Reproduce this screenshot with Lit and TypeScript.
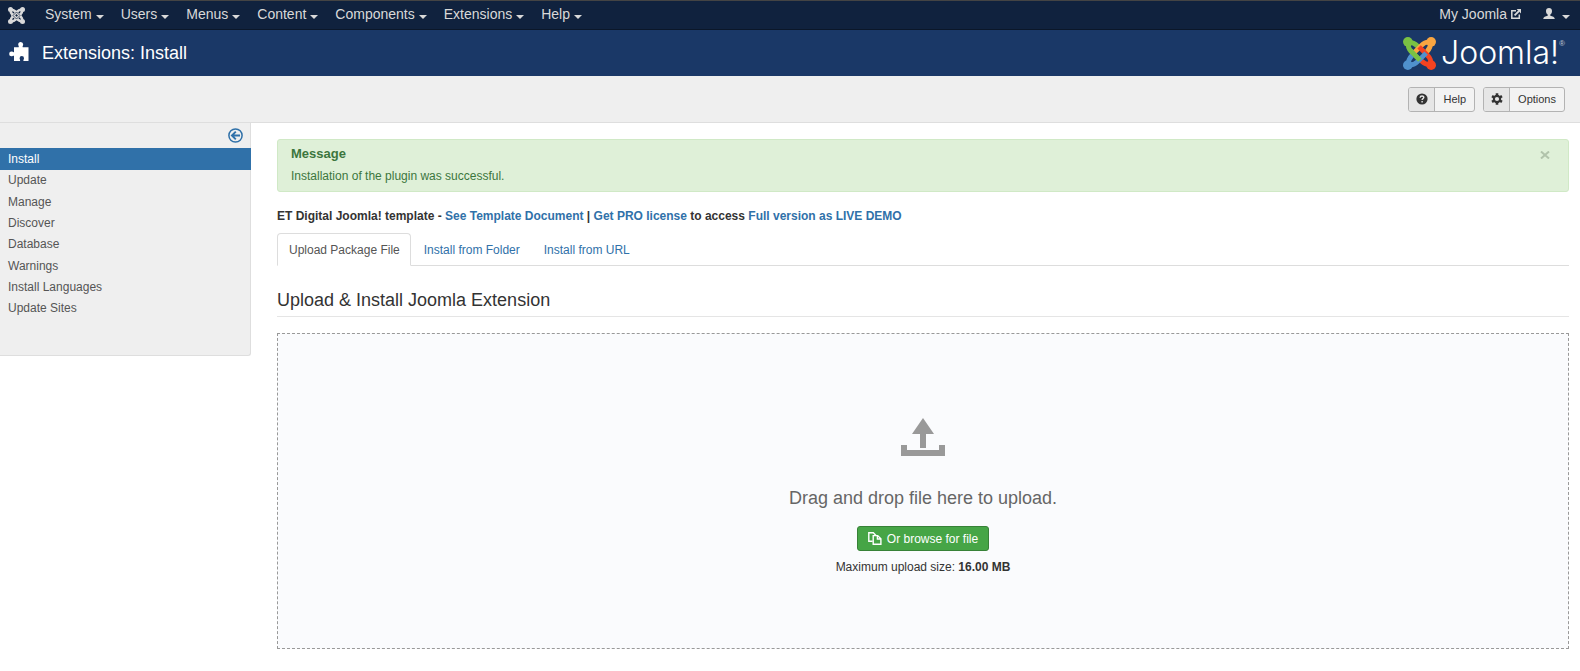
import { LitElement, html, css, svg } from "lit";
import { customElement, property, state } from "lit/decorators.js";
import { classMap } from "lit/directives/class-map.js";

const MENUS = ["System", "Users", "Menus", "Content", "Components", "Extensions", "Help"];
const SIDEBAR = ["Install", "Update", "Manage", "Discover", "Database", "Warnings", "Install Languages", "Update Sites"];
const TABS = ["Upload Package File", "Install from Folder", "Install from URL"];

/* One arm of the emblem; the other three are quarter turns of it. */
const ARM = "M16.800 11.200L14.600 9C12.400 6.800 9.600 5.400 5.600 5.600C4.600 10 6 12.400 8.600 15L17.400 23.800";
const arm = (turn: number, color: string) => svg`
  <g transform="rotate(${turn} 17 17)" fill="none" stroke=${color}>
    <path d=${ARM} stroke-width="5"/>
    <circle cx="5" cy="5" r="5" fill=${color} stroke="none"/>
  </g>`;
const emblem = (colors: string[]) => svg`
  ${arm(0, colors[0])}${arm(90, colors[1])}${arm(180, colors[2])}${arm(270, colors[3])}
  <path d="M7.600 14L17.400 23.800" fill="none" stroke=${colors[0]} stroke-width="5"/>`;

@customElement("joomla-topbar")
export class JoomlaTopbar extends LitElement {
  static styles = css`
    :host { display: block; }
    .bar { display: flex; align-items: center; height: 26px; background: #10223e; border-top: 1px solid #444; border-bottom: 1px solid #0b1729; font-size: 14px; line-height: 20px; padding: 0 8px 2px; }
    .home { display: flex; width: 17px; margin-right: 12px; }
    .menus { display: flex; flex: 1; gap: 1px; margin: 0; padding: 0; list-style: none; }
    a { display: flex; align-items: center; gap: 4px; color: #d9d9d9; text-decoration: none; padding: 0 8px; }
    a.home { padding: 2px 0 0; }
    .caret { width: 0; border: 4px solid transparent; border-top-color: currentColor; border-bottom: 0; margin-top: 5px; }
    .user { padding: 0 2px 0 14px; gap: 7px; }
  `;
  render() {
    return html`<nav class="bar">
      <a class="home" href="#" aria-label="Control Panel">
        <svg width="17" height="17" viewBox="0 0 34 34">${emblem(["#d9d9d9", "#d9d9d9", "#d9d9d9", "#d9d9d9"])}
          <path d="M17 10l7 7-7 7-7-7z" fill="none" stroke="#10223e" stroke-width="1.400"/></svg>
      </a>
      <ul class="menus">${MENUS.map((m) => html`<li><a href="#">${m}<span class="caret"></span></a></li>`)}</ul>
      <a href="#">My Joomla
        <svg width="10" height="10" viewBox="0 0 10 10" fill="none" stroke="currentColor"><path d="M5 1.700H.8V9.200H8.300V5.600" stroke-width="1.500"/><path d="M3.600 6.400L8 2" stroke-width="1.800"/><path d="M5.600 0H10v4.400z" fill="currentColor" stroke="none"/></svg>
      </a>
      <a class="user" href="#" aria-label="User menu">
        <svg width="12" height="12" viewBox="0 0 12 12" fill="currentColor"><path d="M6 0C7.900 0 9 1.200 9 3.100 9 4.700 8.300 6 7.300 6.600V7.700C9.500 8.100 11.700 9 11.800 11H.2C.3 9 2.500 8.100 4.700 7.700V6.600C3.700 6 3 4.700 3 3.100 3 1.200 4.100 0 6 0z"/></svg>
        <span class="caret"></span>
      </a>
    </nav>`;
  }
}

@customElement("joomla-header")
export class JoomlaHeader extends LitElement {
  @property() heading = "";
  static styles = css`
    :host { display: block; }
    .header { display: flex; align-items: center; height: 46px; padding: 0 15px 0 9px; background: #1a3867; color: #fff; }
    .puzzle { margin-bottom: 2px; }
    h1 { flex: 1; margin: 0 0 0 13px; font-size: 18px; line-height: 24px; font-weight: 400; }
    .brand { display: flex; align-items: center; gap: 5px; }
    .word { font: 300 32px/36px Inter, "Open Sans", sans-serif; }
    .reg { font-size: 8px; align-self: flex-start; line-height: 18px; margin-left: -5px; opacity: 0.7; }
  `;
  render() {
    return html`<header class="header">
      <svg class="puzzle" width="20" height="20" viewBox="0 0 20 20" fill="#fff"><path d="M5 5.300H9.600C10.300 4.700 9.200 3.700 9.200 2.500A2.500 2.500 0 0 1 14.200 2.500C14.200 3.700 13.100 4.700 13.800 5.300H19.500V19H14.500C14 18 15 17.400 15 16.200A2.200 2.200 0 0 0 10.600 16.200C10.600 17.400 11.600 18 11 19H5V14C4.400 13.200 3.700 14.300 2.500 14.300A2.300 2.300 0 0 1 2.500 9.600C3.700 9.600 4.400 10.700 5 10z"/></svg>
      <h1>${this.heading}</h1>
      <div class="brand">
        <svg width="33" height="33" viewBox="0 0 34 34">${emblem(["#7ac143", "#f9a541", "#f44321", "#5091cd"])}</svg>
        <span class="word">Joomla!</span><span class="reg">®</span>
      </div>
    </header>`;
  }
}

@customElement("joomla-toolbar")
export class JoomlaToolbar extends LitElement {
  static styles = css`
    :host { display: block; }
    .bar { display: flex; justify-content: flex-end; align-items: center; gap: 8px; height: 46px; padding: 0 15px; background: #efefef; border-bottom: 1px solid #dedede; }
    button { display: flex; align-items: stretch; height: 25px; padding: 0; font: 11px/23px "Liberation Sans", Arial, sans-serif; color: #333; background: #f3f3f3; border: 1px solid #b3b3b3; border-radius: 3px; overflow: hidden; }
    .icon { display: grid; place-items: center; width: 25px; background: #e6e6e6; border-right: 1px solid #b3b3b3; }
    .label { padding: 0 8px; }
  `;
  render() {
    return html`<div class="bar">
      <button type="button"><span class="icon"><svg width="12" height="12" viewBox="0 0 12 12"><circle cx="6" cy="6" r="5.600" fill="#333"/><path d="M4.100 4.700C4.200 2.400 7.900 2.500 7.800 4.500 7.700 5.700 6.100 5.700 6.100 7.100M6.100 8.100V9.500" fill="none" stroke="#e6e6e6" stroke-width="1.400"/></svg></span><span class="label">Help</span></button>
      <button type="button"><span class="icon"><svg width="12" height="12" viewBox="0 0 12 12"><g stroke="#333" stroke-width="2.600"><path d="M6 .3V11.700M1 3.100L11 8.900M1 8.900L11 3.100"/></g><circle cx="6" cy="6" r="4.200" fill="#333"/><circle cx="6" cy="6" r="2.100" fill="#e6e6e6"/></svg></span><span class="label">Options</span></button>
    </div>`;
  }
}

@customElement("joomla-sidebar")
export class JoomlaSidebar extends LitElement {
  static styles = css`
    :host { display: block; }
    .side { background: #efefef; border: 1px solid #dedede; border-width: 0 1px 1px 0; border-radius: 0 0 3px 0; padding-bottom: 36px; }
    .top { display: flex; justify-content: flex-end; padding: 5px 7px 5px 0; }
    button { display: flex; border: 0; padding: 0; background: none; }
    ul { list-style: none; margin: 0; padding: 0; display: grid; grid-auto-rows: minmax(21px, auto); }
    a { display: block; padding: 0 8px; font-size: 12px; line-height: 21px; color: #555; text-decoration: none; }
    .active { background: #3071a9; color: #fff; margin-right: -1px; line-height: 22px; }
    li:nth-child(3n) a { line-height: 22px; }
  `;
  render() {
    return html`<aside class="side">
      <div class="top"><button type="button" aria-label="Hide the sidebar">
        <svg width="15" height="15" viewBox="0 0 15 15" fill="none" stroke="#3071a9"><circle cx="7.500" cy="7.500" r="6.600" stroke-width="1.500"/><path d="M12 7.500H4.500M7.800 3.600L3.900 7.500L7.800 11.400" stroke-width="1.900"/></svg>
      </button></div>
      <ul>${SIDEBAR.map((s, i) => html`<li><a href="#" class=${classMap({ active: i === 0 })}>${s}</a></li>`)}</ul>
    </aside>`;
  }
}

@customElement("joomla-installer")
export class JoomlaInstaller extends LitElement {
  @state() private tab = 0;
  @state() private open = true;
  static styles = css`
    :host { display: block; font-size: 12px; line-height: 16px; }
    a { color: #3071a9; text-decoration: none; }
    .alert { display: flex; align-items: flex-start; justify-content: space-between; padding: 6px 18px 7px 13px; background: #dff0d8; border: 1px solid #d0e9c6; border-radius: 3px; color: #3c763d; }
    .alert h4 { margin: 0 0 6px; font-size: 13px; line-height: 16px; }
    .alert p { margin: 0; }
    .close { display: flex; border: 0; background: none; padding: 5px 0; }
    .promo { margin: 16px 0 9px; font-weight: 700; }
    .tabs { display: flex; gap: 1px; border-bottom: 1px solid #ddd; }
    .tab { margin-bottom: -1px; padding: 8px 10px 7px 11px; font: 12px/16px "Liberation Sans", Arial, sans-serif; color: #3071a9; background: none; border: 1px solid transparent; border-radius: 4px 4px 0 0; }
    .tab.on { color: #555; background: #fff; border-color: #ddd; border-bottom-color: #fff; }
    h2 { margin: 19px 0 16px; font-size: 18px; line-height: 31px; font-weight: 400; border-bottom: 1px solid #e5e5e5; }
    .drop { display: flex; flex-direction: column; align-items: center; padding: 84px 0 73px; background: #fafbfd; border: 1px dashed #999; }
    .lead { margin: 31px 0 17px; font-size: 18px; line-height: 22px; color: #666; }
    .browse { display: flex; align-items: center; gap: 5px; height: 25px; padding: 0 10px; font: 12px/16px "Liberation Sans", Arial, sans-serif; color: #fff; background: #46a546; border: 1px solid #378137; border-radius: 3px; }
    .max { margin: 8px 0 0; }
  `;
  render() {
    return html`
      ${this.open ? html`<div class="alert" role="alert">
        <div><h4>Message</h4><p>Installation of the plugin was successful.</p></div>
        <button class="close" type="button" aria-label="Close" @click=${() => (this.open = false)}>
          <svg width="10" height="8" viewBox="0 0 10 8"><path d="M1 .5L9 7.500M9 .5L1 7.500" stroke="#b1c3ab" stroke-width="2"/></svg>
        </button>
      </div>` : ""}
      <p class="promo">ET Digital Joomla! template - <a href="#">See Template Document</a> | <a href="#">Get PRO license</a> to access <a href="#">Full version as LIVE DEMO</a></p>
      <div class="tabs" role="tablist">${TABS.map((t, i) => html`<button type="button" role="tab" aria-selected=${i === this.tab} class=${classMap({ tab: true, on: i === this.tab })} @click=${() => (this.tab = i)}>${t}</button>`)}</div>
      <h2>Upload &amp; Install Joomla Extension</h2>
      <section class="drop">
        <svg width="44" height="38" viewBox="0 0 44 38" fill="#999"><path d="M22 0L33 16H25V30H19V16H11zM0 27H6V32H38V27H44V38H0z"/></svg>
        <p class="lead">Drag and drop file here to upload.</p>
        <button class="browse" type="button">
          <svg width="14" height="13" viewBox="0 0 14 13" fill="none" stroke="#fff" stroke-width="1.400"><path d="M4.600 9.300H.8V.8H5.300L8 3.400"/><path d="M5.200 3.600H9.700L12.900 6.700V12.200H5.200zM9.400 3.600V7H12.900"/></svg>
          Or browse for file
        </button>
        <p class="max">Maximum upload size: <strong>16.00 MB</strong></p>
      </section>`;
  }
}

@customElement("app-root")
export class AppRoot extends LitElement {
  static styles = css`
    :host { display: block; min-height: 100vh; background: #fff; color: #333; font-family: "Liberation Sans", Arial, sans-serif; font-size: 12px; }
    .body { display: grid; grid-template-columns: 251px minmax(0, 1fr); gap: 26px; align-items: start; padding-right: 11px; }
    .main { padding: 16px 0 22px; }
  `;
  render() {
    return html`
      <joomla-topbar></joomla-topbar>
      <joomla-header heading="Extensions: Install"></joomla-header>
      <joomla-toolbar></joomla-toolbar>
      <div class="body">
        <joomla-sidebar></joomla-sidebar>
        <main class="main"><joomla-installer></joomla-installer></main>
      </div>`;
  }
}
